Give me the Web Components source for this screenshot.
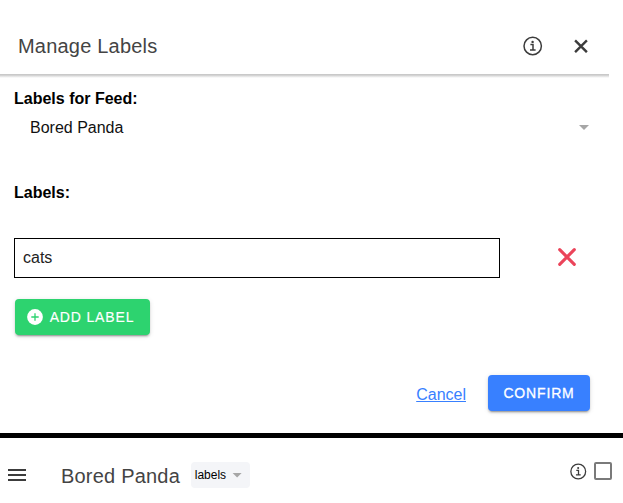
<!DOCTYPE html>
<html lang="en">
<head>
<meta charset="utf-8">
<title>Manage Labels</title>
<style>
html,body{margin:0;height:100%;overflow:hidden;background:#fff}
body{font-family:"Liberation Sans",Arial,sans-serif;color:#000}
</style>
</head>
<body>
<label-page></label-page>
<script>
const define = (name, html) => {
  const tpl = document.createElement('template');
  tpl.innerHTML = html;
  customElements.define(name, class extends HTMLElement {
    constructor() {
      super();
      this.attachShadow({ mode: 'open' }).append(tpl.content.cloneNode(true));
    }
  });
};

define('info-icon', `
<style>:host{display:block;width:20px;height:20px;color:#3c3c3c}svg{display:block;width:100%;height:100%}</style>
<svg viewBox="0 0 20 20" fill="none" stroke="currentColor" stroke-width="1.5">
<circle cx="9.7" cy="10" r="8.7"/><path d="M7.4 8.6h2.6v5.2M7 14.1h5.6"/><circle cx="9.6" cy="5.9" r="1.2" fill="currentColor" stroke="none"/></svg>`);

define('close-icon', `
<style>:host{display:block;width:14px;height:14px;color:#3c3c3c}svg{display:block;width:100%;height:100%}</style>
<svg viewBox="0 0 14 14" fill="none" stroke="currentColor" stroke-width="2.4"><path d="M1.1 1.4l11.8 11.8M12.9 1.4L1.1 13.2"/></svg>`);

define('remove-icon', `
<style>:host{display:block;width:18px;height:18px;color:#eb445a}svg{display:block}</style>
<svg width="18" height="18" fill="none" stroke="currentColor" stroke-width="3.1" stroke-linecap="round"><path d="M1.7 1.7l14.6 14.6M16.3 1.7L1.7 16.3"/></svg>`);

define('add-icon', `
<style>:host{display:block;width:16px;height:16px}svg{display:block}</style>
<svg width="16" height="16"><circle cx="8" cy="8" r="7.9" fill="#fff"/><path d="M8 4.3v7.4M4.3 8h7.4" stroke="#2dd36f" stroke-width="1.3"/></svg>`);

define('menu-icon', `
<style>:host{display:flex;flex-direction:column;gap:3px;width:18px}i{height:2px;background:#3c3c3c}</style><i></i><i></i><i></i>`);

define('caret-icon', `
<style>:host{display:block;width:10px;height:5px;background:#a6a6a6;clip-path:polygon(0 0,100% 0,50% 100%)}</style>`);

define('action-button', `
<style>:host{display:flex;box-sizing:border-box;align-items:center;justify-content:center;height:36px;border-radius:4px;color:#fff;background:var(--fill);font-size:14px;line-height:16px;letter-spacing:.84px;white-space:nowrap;
box-shadow:0 3px 1px -2px rgba(0,0,0,.2),0 2px 2px 0 rgba(0,0,0,.14),0 1px 5px 0 rgba(0,0,0,.12)}</style><slot></slot>`);

define('modal-header', `
<style>:host{display:block;width:609px}
.bar{display:flex;box-sizing:border-box;align-items:center;height:74px;padding:18px 21px 0 18px}
.shade{height:4px;margin-bottom:-4px;background:linear-gradient(#c4c4c4,#d2d2d2 35%,#f0f0f0 75%,#fff)}
h1{margin:0;flex:1;font-weight:400;font-size:20px;line-height:24px;color:#444;letter-spacing:.2px}
close-icon{margin-left:31px}</style>
<div class="bar"><h1><slot></slot></h1><info-icon></info-icon><close-icon></close-icon></div><div class="shade"></div>`);

define('feed-select', `
<style>:host{display:flex;align-items:center;justify-content:space-between;height:20px;font-size:16px;line-height:20px;color:#111}
caret-icon{margin-top:-1px}</style>
<span><slot></slot></span><caret-icon></caret-icon>`);

define('label-row', `
<style>:host{display:flex;align-items:center}
.field{box-sizing:border-box;width:486px;height:40px;border:1px solid #000;padding:0 8px;font-size:16px;line-height:38px;color:#222}
remove-icon{margin:-2px 0 0 58px}</style>
<div class="field"><slot></slot></div><remove-icon></remove-icon>`);

define('labels-modal', `
<style>:host{display:block;height:433px}
section{display:flow-root}
h2{margin:0 0 0 14px;font-size:16px;line-height:20px}
section{display:flex;flex-direction:column}
feed-select{margin:9px 34px 0 30px}
label-row{margin:35px 0 0 14px}
.first{margin-top:15px}.second{margin-top:45px}
.add{--fill:#2dd36f;width:135px;margin:21px 0 0 15px;padding-right:4px;-webkit-text-stroke:.15px #fff}
add-icon{margin-right:7px}
footer{display:flex;justify-content:flex-end;align-items:center;gap:22px;padding:40px 33px 0 0}
a{font-size:16px;line-height:20px;color:#3880ff;text-decoration:underline;margin-top:4px}
.confirm{--fill:#3880ff;width:102px;-webkit-text-stroke:.3px #fff}</style>
<modal-header>Manage Labels</modal-header>
<section>
<h2 class="first">Labels for Feed:</h2><feed-select>Bored Panda</feed-select>
<h2 class="second">Labels:</h2><label-row>cats</label-row>
<action-button class="add"><add-icon></add-icon>ADD LABEL</action-button>
</section>
<footer><a>Cancel</a><action-button class="confirm">CONFIRM</action-button></footer>`);

define('feed-toolbar', `
<style>:host{display:flex;box-sizing:border-box;align-items:center;height:70px;border-top:5px solid #000;padding:9px 11px 0 8px}
h1{margin:2px 0 0 35px;font-weight:400;font-size:20px;line-height:24px;color:#444;letter-spacing:.2px}
.chip{display:flex;box-sizing:border-box;align-items:center;gap:6px;width:59px;height:26px;margin-left:11.3px;padding-left:3.5px;border-radius:4px;background:#f4f5f8;font-size:12px}
info-icon{width:17px;height:17px;margin:-7px 7px 0 auto}
.box{box-sizing:border-box;width:18px;height:18px;margin-top:-8px;border:2px solid #7a7a7a;border-radius:2px}</style>
<menu-icon></menu-icon><h1>Bored Panda</h1><div class="chip"><span>labels</span><caret-icon></caret-icon></div><info-icon></info-icon><div class="box"></div>`);

define('label-page', `<style>:host{display:block;width:623px;height:503px;background:#fff}</style><labels-modal></labels-modal><feed-toolbar></feed-toolbar>`);
</script>
</body>
</html>
